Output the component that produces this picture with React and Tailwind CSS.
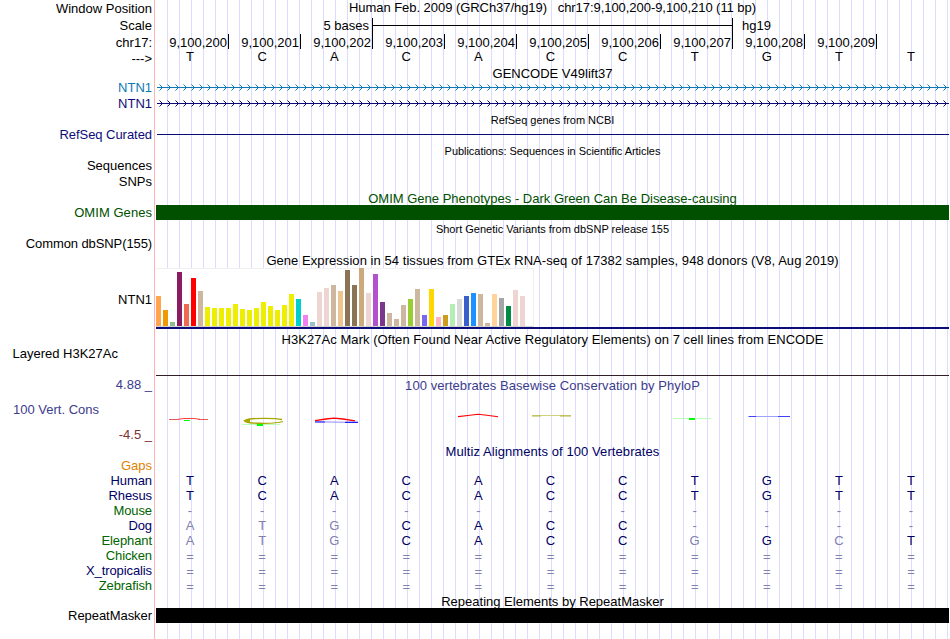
import clsx from 'clsx'

const BASES = 'TCACACCTGTT'.split('')

const POSITIONS = Array.from({ length: 10 }, (_, i) => `9,100,20${i}`)

const GTEX = [
  [30, '#ffa54f'], [16, '#ee9a00'], [4, '#8fbc8f'], [54, '#8b1c62'], [22, '#ee6a50'], [48, '#ff0000'],
  [35, '#cdb79e'], [19, '#eeee00'], [18, '#eeee00'], [18, '#eeee00'], [18, '#eeee00'], [22, '#eeee00'],
  [17, '#eeee00'], [16, '#eeee00'], [18, '#eeee00'], [24, '#eeee00'], [20, '#eeee00'], [16, '#eeee00'],
  [21, '#eeee00'], [32, '#eeee00'], [27, '#00cdcd'], [11, '#ee82ee'], [4, '#9ac0cd'], [34, '#eed5d2'],
  [38, '#eed5d2'], [41, '#cdb79e'], [35, '#eec591'], [56, '#8b7355'], [41, '#8b7355'], [58, '#cdaa7d'],
  [33, '#eed5d2'], [52, '#b452cd'], [24, '#7a378b'], [13, '#cdb79e'], [7, '#cdb79e'], [21, '#cdb79e'],
  [27, '#9acd32'], [37, '#cdb79e'], [11, '#7a67ee'], [37, '#ffd700'], [9, '#ffb6c1'], [11, '#cd9b1d'],
  [22, '#b4eeb4'], [27, '#d9d9d9'], [30, '#3a5fcd'], [33, '#1e90ff'], [32, '#cdb79e'], [3, '#cdb79e'],
  [32, '#ffd39b'], [28, '#a6a6a6'], [20, '#008b45'], [36, '#eed5d2'], [30, '#eed5d2'], [0, '#ff00ff'],
]

const SPECIES = [
  { name: 'Human', color: 'text-[#000064]', seq: 'TCACACCTGTT' },
  { name: 'Rhesus', color: 'text-[#000064]', seq: 'TCACACCTGTT' },
  { name: 'Mouse', color: 'text-[#006400]', seq: '-----------' },
  { name: 'Dog', color: 'text-[#000064]', seq: 'atgCACC----' },
  { name: 'Elephant', color: 'text-[#006400]', seq: 'atgCACCgGcT' },
  { name: 'Chicken', color: 'text-[#006400]', seq: '===========' },
  { name: 'X_tropicalis', color: 'text-[#000064]', seq: '===========' },
  { name: 'Zebrafish', color: 'text-[#006400]', seq: '===========' },
]

function Label({ className, children }) {
  return <div className={clsx('flex items-center justify-end', className)}>{children}</div>
}

function Title({ className, children }) {
  return <div className={clsx('flex items-center justify-center whitespace-pre', className)}>{children}</div>
}

// lower case letters are mismatches and are drawn faded
function Letters({ seq, className }) {
  return (
    <div className={clsx('-ml-0.5 grid w-[793px] grid-cols-11 items-center text-center', className)}>
      {seq.map((c, i) => (
        <span key={i} className={clsx(!/[A-Z]/.test(c) && 'text-[#8080b1]', c === '=' && 'pt-0.5')}>
          {c.toUpperCase()}
        </span>
      ))}
    </div>
  )
}

function Strand({ color }) {
  return (
    <svg width="793" height="16" shapeRendering="crispEdges" className={color}>
      <rect x="1" y="7" width="792" height="1" fill="currentColor" />
      {Array.from({ length: 99 }, (_, i) => {
        const x = 3 + i * 8
        return (
          <g key={i} fill="currentColor">
            <rect x={x} y="4" width="1" height="1" opacity="0.5" />
            <rect x={x + 1} y="5" width="1" height="1" />
            <rect x={x + 2} y="6" width="1" height="1" />
            <rect x={x + 3} y="7" width="1" height="1" />
            <rect x={x + 2} y="8" width="1" height="1" />
            <rect x={x + 1} y="9" width="1" height="1" />
            <rect x={x} y="10" width="1" height="1" opacity="0.5" />
          </g>
        )
      })}
    </svg>
  )
}

function Conservation() {
  return (
    <svg width="793" height="50" viewBox="156 394 793 50" fill="none">
      <path d="M169 419.5 H179 M198 419.5 H208" stroke="#e03030" strokeWidth="0.8" />
      <path d="M178 419.3 L184 418.5 H194 L200 419.3" stroke="#ff4040" strokeWidth="1" />
      <rect x="184" y="420" width="6" height="1" fill="#00ff00" />
      <path d="M282 419.5 C276 418 250 417.5 245 420.5 C242 424 276 424 283 421.5" stroke="#a8a800" strokeWidth="1.3" />
      <path d="M243 420.8 L250 418.3 V423.3 Z" fill="#a8a800" />
      <rect x="242" y="424" width="38" height="1" fill="#bbffbb" />
      <rect x="257" y="424" width="6" height="2" fill="#00ff00" />
      <path d="M315 421.8 L358 422.4" stroke="#8080ff" strokeWidth="0.9" />
      <path d="M315 422 H325 M345 422.4 H358" stroke="#2020ff" strokeWidth="1.1" />
      <path d="M315 420.7 L326 419 L334 418.2 L343 419 L355 420.8" stroke="#ff0000" strokeWidth="1.3" />
      <path d="M458 416.6 L468 415.5 L478 414.3 L487 415.3 L498 416.7" stroke="#ff0000" strokeWidth="1.1" />
      <rect x="532" y="415" width="39" height="1" fill="#d2d27c" />
      <path d="M532 416 H541 M560 416 H571" stroke="#b4b440" strokeWidth="1" />
      <rect x="673" y="418" width="38" height="1" fill="#bbffbb" />
      <rect x="689" y="418" width="6" height="2" fill="#00ff00" />
      <rect x="748" y="416" width="42" height="1" fill="#a0a0ff" />
      <path d="M749 416.5 H756 M778 416.5 H790" stroke="#4040ff" strokeWidth="1" />
    </svg>
  )
}

function Labels() {
  return (
    <div className="w-[154px] shrink-0 pr-0.5">
      <Label className="h-[17px]">Window Position</Label>
      <Label className="h-[17px]">Scale</Label>
      <Label className="h-4">chr17:</Label>
      <Label className="h-4">---&gt;</Label>
      <Label className="mt-[13px] h-4 text-[#0c78b4]">NTN1</Label>
      <Label className="h-4 text-[#0c0c78]">NTN1</Label>
      <Label className="mt-[15px] h-4 text-[#0c0c78] tracking-[-0.05px]">RefSeq Curated</Label>
      <Label className="mt-[15px] h-4">Sequences</Label>
      <Label className="h-4">SNPs</Label>
      <Label className="mt-[15px] h-4 tracking-[0.05px] text-[#005000]">OMIM Genes</Label>
      <Label className="mt-[15px] h-4 tracking-[-0.1px]">Common dbSNP(155)</Label>
      <Label className="mt-4 h-16">NTN1</Label>
      <Label className="mt-3.5 mr-[34px] h-4">Layered H3K27Ac</Label>
      <Label className="mt-[15px] h-4 text-[#3c3c8c]">4.88 _</Label>
      <Label className="mt-[9px] mr-[53px] h-4 text-[#3c3c8c]">100 Vert. Cons</Label>
      <Label className="mt-[9px] h-4 text-[#783232]">-4.5 _</Label>
      <Label className="mt-4 h-[15px] text-[#e08000]">Gaps</Label>
      {SPECIES.map((s) => (
        <Label key={s.name} className={clsx('h-[15px] tracking-[-0.1px]', s.color)}>{s.name}</Label>
      ))}
      <Label className="mt-[15px] h-[15px] tracking-[-0.05px]">RepeatMasker</Label>
    </div>
  )
}

function Tracks() {
  return (
    <div className="w-[793px] shrink-0">
      <Title className="h-[17px] pb-0.5 tracking-[-0.05px]">Human Feb. 2009 (GRCh37/hg19)   chr17:9,100,200-9,100,210 (11 bp)</Title>
      <div className="flex h-[17px] items-center">
        <span className="w-[213px] text-right">5 bases</span>
        <div className="ml-[3px] flex h-4 w-[361px] items-center border-x border-black">
          <div className="-mt-px h-px w-full bg-black" />
        </div>
        <span className="ml-[9px]">hg19</span>
      </div>
      <div className="flex h-4 pl-px">
        {POSITIONS.map((p) => (
          <div key={p} className="flex h-[15px] w-[72px] items-center justify-end border-r border-black pr-px pt-px">{p}</div>
        ))}
      </div>
      <Letters seq={BASES} className="h-4 pb-1" />
      <Title className="h-3.5">GENCODE V49lift37</Title>
      <Strand color="block text-[#0c78b4]" />
      <Strand color="block text-[#0c0c78]" />
      <Title className="h-[15px] pt-0.5 text-[11px] tracking-[-0.03px]">RefSeq genes from NCBI</Title>
      <div className="flex h-4 items-center pl-px">
        <div className="-mt-px h-px w-full bg-[#0c0c78]" />
      </div>
      <Title className="h-[15px] pt-0.5 text-[11px] tracking-[-0.04px]">Publications: Sequences in Scientific Articles</Title>
      <Title className="mt-8 h-[15px] pt-0.5 text-[#005000]">OMIM Gene Phenotypes - Dark Green Can Be Disease-causing</Title>
      <div className="h-[15px] bg-[#005000]" />
      <Title className="h-[17px] pt-0.5 text-[11px]">Short Genetic Variants from dbSNP release 155</Title>
      <Title className="mt-[15px] h-4 tracking-[0.055px]">Gene Expression in 54 tissues from GTEx RNA-seq of 17382 samples, 948 donors (V8, Aug 2019)</Title>
      <div className="flex h-[59px] w-[378px] items-end gap-0.5 bg-white pb-px shadow-[inset_-1px_1px_#f0f0f0,inset_0_-1px_#d2d2d2]">
        {GTEX.map(([h, color], i) => (
          <div key={i} className="w-[5px] shrink-0" style={{ height: h, background: color }} />
        ))}
      </div>
      <div className="h-0.5 bg-[#0c0c78]" />
      <Title className="mt-0.5 h-[17px] tracking-[0.05px]">H3K27Ac Mark (Often Found Near Active Regulatory Elements) on 7 cell lines from ENCODE</Title>
      <div className="mt-[27px] h-px bg-[#321e28]" />
      <Title className="mt-0.5 h-4 pb-0.5 tracking-[0.06px] text-[#3c3c8c]">100 vertebrates Basewise Conservation by PhyloP</Title>
      <Conservation />
      <Title className="h-4 pb-0.5 tracking-[0.08px] text-[#000064]">Multiz Alignments of 100 Vertebrates</Title>
      <div className="mt-[13px]">
        {SPECIES.map((s) => (
          <Letters key={s.name} seq={s.seq.split('')} className="h-[15px] text-[#000064]" />
        ))}
      </div>
      <Title className="h-[15px] pt-0.5">Repeating Elements by RepeatMasker</Title>
      <div className="h-[15px] bg-black" />
    </div>
  )
}

export default function App() {
  return (
    <div className="h-[639px] w-[950px] overflow-hidden bg-white">
      <div className="flex h-full w-[949px] font-['Liberation_Sans',Arial,sans-serif] text-[13px] leading-none whitespace-nowrap text-black">
        <Labels />
        <div className="flex flex-1 border-l border-[#ffb4b4] pl-px">
          <div className="flex w-full bg-[repeating-linear-gradient(to_right,transparent_0_11px,#dcdcff_11px_12px)]">
            <Tracks />
          </div>
        </div>
      </div>
    </div>
  )
}
